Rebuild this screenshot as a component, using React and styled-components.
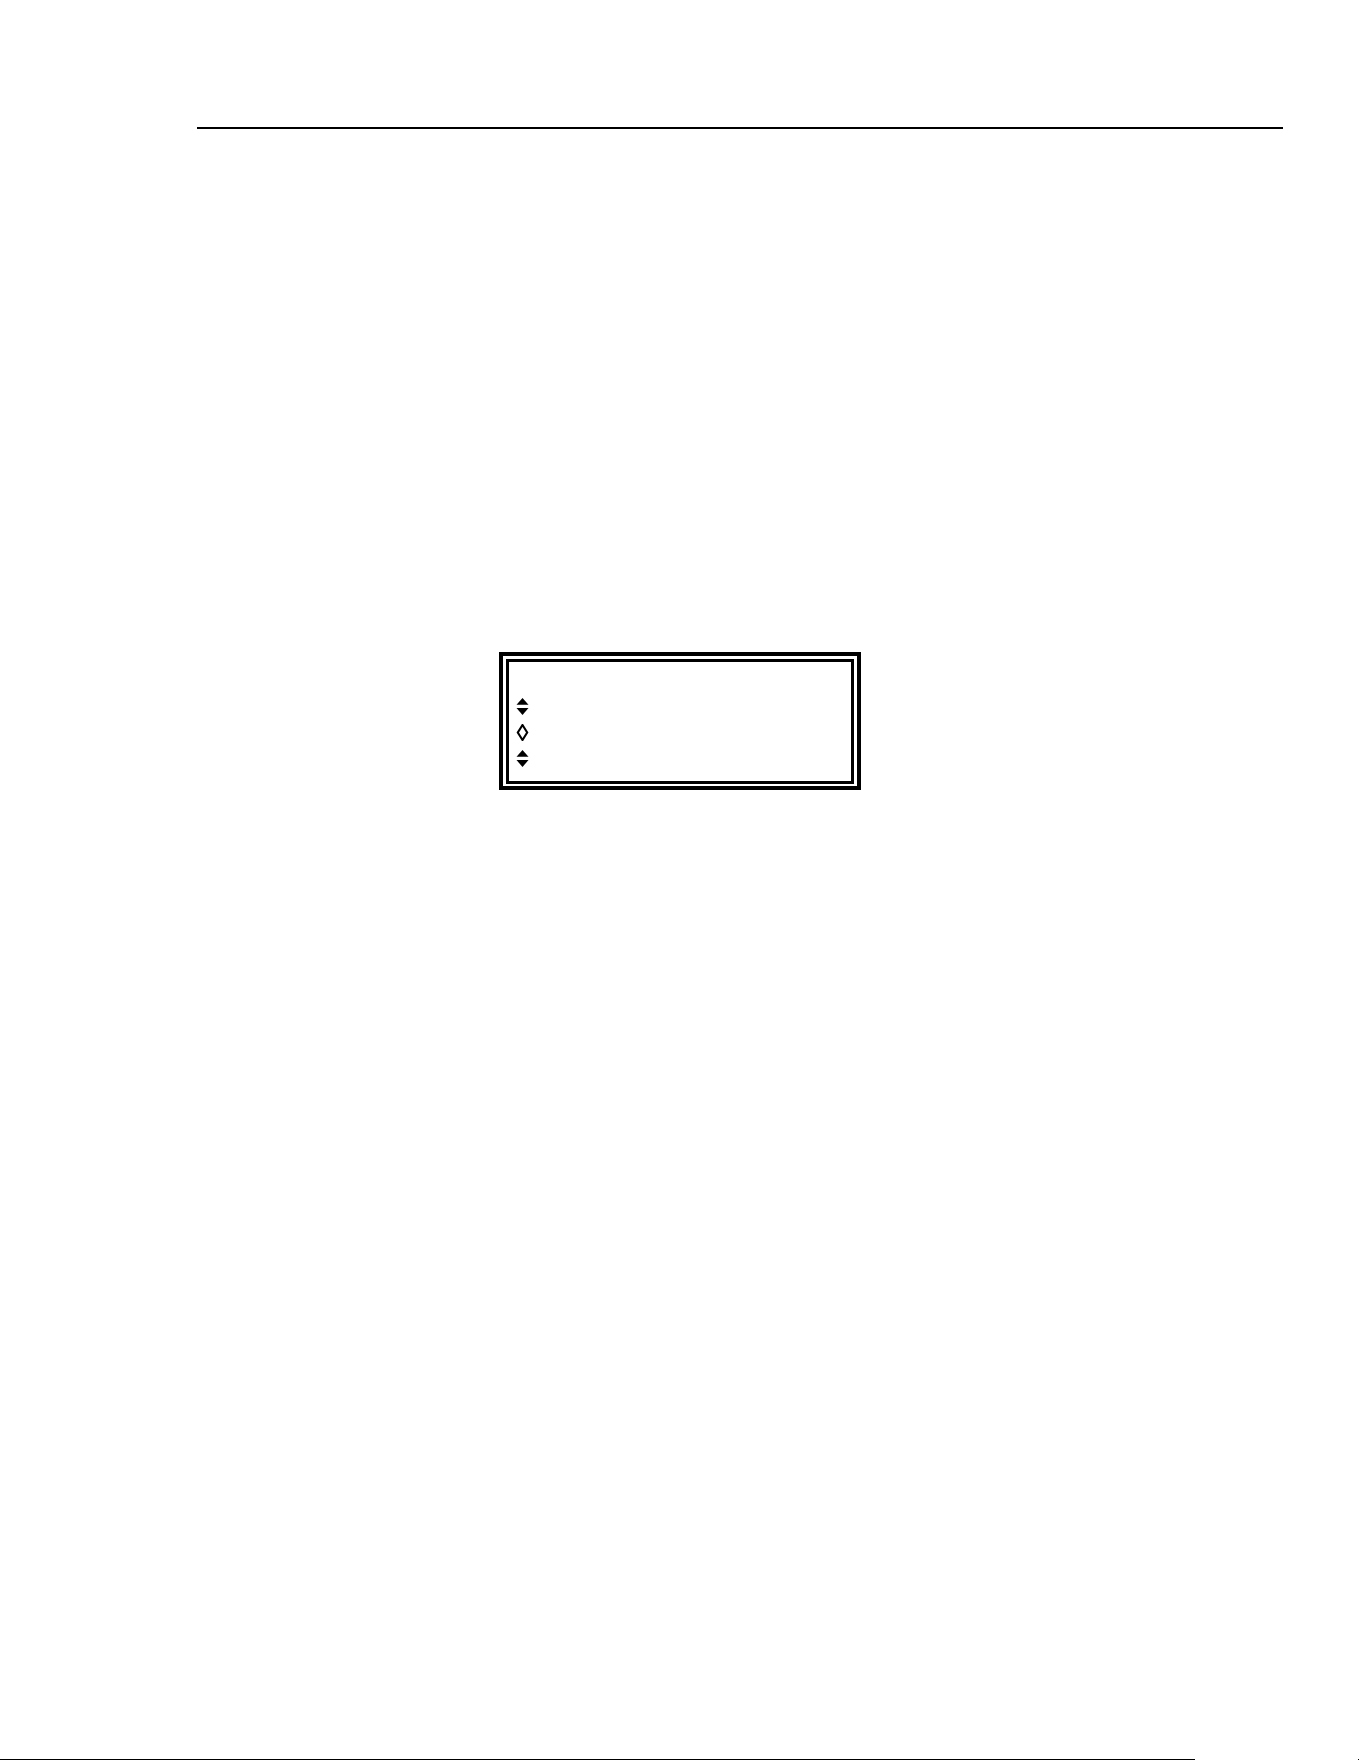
import React from "react";
import styled, { createGlobalStyle } from "styled-components";

const GlobalStyle = createGlobalStyle`
  html, body {
    margin: 0;
    padding: 0;
    background: #ffffff;
    font-family: "Liberation Serif", "Times New Roman", serif;
  }
`;

const Page = styled.div`
  width: 1361px;
  height: 1761px;
  display: flex;
  flex-direction: column;
  background: #ffffff;
  overflow: hidden;
`;

const HeaderRule = styled.div`
  margin: 127px 0 0 197px;
  width: 1086px;
  height: 2px;
  background: #000000;
`;

const DisplayFrame = styled.div`
  margin: 523px 0 0 499px;
  width: 362px;
  height: 138px;
  box-sizing: border-box;
  border: 4px solid #000000;
  padding: 3px 3px 2px 3px;
  display: flex;
`;

const DisplayScreen = styled.div`
  flex: 1;
  box-sizing: border-box;
  border: 3px solid #000000;
  padding: 31px 0 0 7px;
  display: flex;
  flex-direction: column;
`;

const SymbolRow = styled.div`
  height: ${(p) => p.$h}px;
  display: flex;
  align-items: center;
`;

const Footer = styled.div`
  margin-top: auto;
  margin-bottom: 1px;
  display: flex;
  align-items: center;
  height: 1px;
`;

const FooterRule = styled.div`
  width: 1195px;
  height: 1px;
  background: #000000;
`;

const FooterDot = styled.div`
  margin-left: 163px;
  width: 1px;
  height: 1px;
  background: #000000;
`;

const UpDown = () => (
  <svg width="13" height="17" viewBox="0 0 13 17">
    <polygon points="6.5,0 12.5,6.8 0.5,6.8" fill="#000" />
    <polygon points="0.5,10 12.5,10 6.5,17" fill="#000" />
  </svg>
);

const Diamond = () => (
  <svg width="13" height="17" viewBox="0 0 13 17">
    <polygon
      points="6.5,1 11.2,8.5 6.5,16 1.8,8.5"
      fill="none"
      stroke="#000"
      strokeWidth="2.1"
    />
  </svg>
);

export default function App() {
  return (
    <>
      <GlobalStyle />
      <Page>
        <HeaderRule />
        <DisplayFrame>
          <DisplayScreen>
            <SymbolRow $h={26}>
              <UpDown />
            </SymbolRow>
            <SymbolRow $h={27}>
              <Diamond />
            </SymbolRow>
            <SymbolRow $h={25}>
              <UpDown />
            </SymbolRow>
          </DisplayScreen>
        </DisplayFrame>
        <Footer>
          <FooterRule />
          <FooterDot />
        </Footer>
      </Page>
    </>
  );
}
